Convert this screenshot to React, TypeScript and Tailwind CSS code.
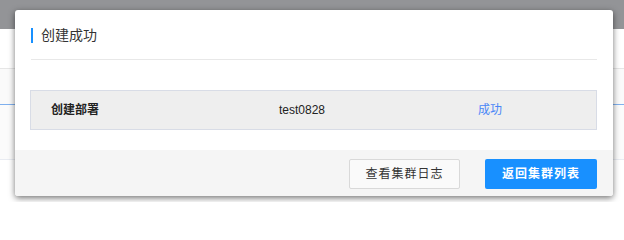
import React from "react";

const font = { fontFamily: '"Liberation Sans", "Noto Sans CJK SC", sans-serif' };

export default function App() {
  return (
    <div className="relative w-[624px] h-[202px] overflow-hidden bg-white" style={font}>
      {/* background page */}
      <div className="flex flex-col">
        <div className="h-[29px] bg-[#939497]" />
        <div className="h-[40px] bg-white border-b border-[#e6e6e6]" />
        <div className="h-[36px] bg-[#fafafa] border-b border-[#7fb0ee]" />
        <div className="h-[55px] bg-[#fbfbfb] border-b border-[#e9ecf2]" />
        <div className="h-[42px] bg-white" />
      </div>

      {/* modal */}
      <div className="absolute left-[15px] top-[10px] w-[598px] h-[186px] bg-white rounded-[3px] shadow-[0_2px_6px_rgba(0,0,0,0.55)] flex flex-col overflow-hidden">
        <div className="pt-[18px] px-[16px]">
          <div className="flex items-center h-[15px]">
            <div className="w-[2px] h-[15px] bg-[#1890ff]" />
            <span className="ml-[8px] text-[14px] leading-[15px] text-[#333]">创建成功</span>
          </div>
          <div className="mt-[16px] h-px bg-[#e8e8e8]" />
        </div>

        <div className="mt-[30px] mx-[15px] mr-[16px] h-[40px] bg-[#eeeeee] border border-[#d8dce6] grid grid-cols-[248px_199px_1fr] items-center text-[12px] text-[#222]">
          <span className="pl-[20px] font-bold">创建部署</span>
          <span>test0828</span>
          <span className="text-[#4a86f7]">成功</span>
        </div>

        <div className="mt-[20px] flex-1 bg-[#f5f5f5] flex justify-end items-start gap-[25px] pt-[9px] pr-[16px]">
          <button className="w-[111px] h-[30px] bg-[#fafafa] border border-[#d9d9d9] rounded-[2px] text-[12px] tracking-[1px] text-[#333]">
            查看集群日志
          </button>
          <button className="w-[112px] h-[30px] bg-[#1890ff] rounded-[2px] text-[12px] tracking-[1px] text-white font-semibold">
            返回集群列表
          </button>
        </div>
      </div>
    </div>
  );
}
